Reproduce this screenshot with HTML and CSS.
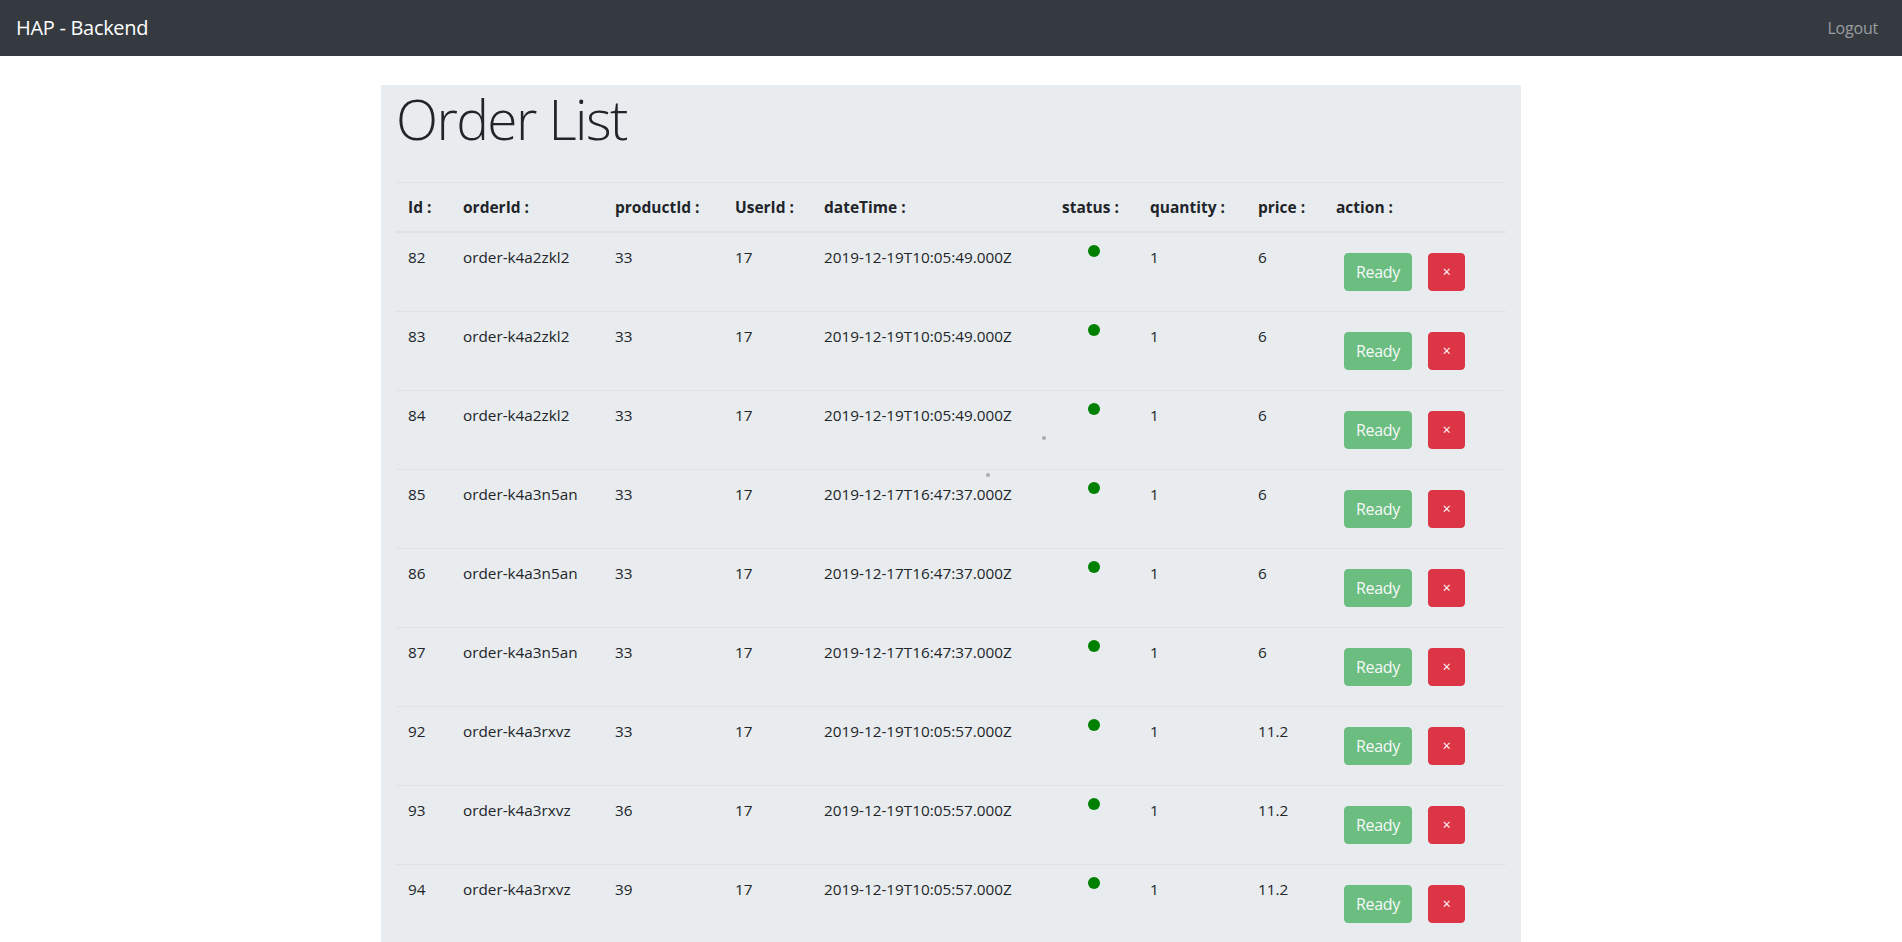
FILE: index.html
```html
<!DOCTYPE html>
<html lang="en">
<head>
<meta charset="utf-8">
<title>HAP - Backend</title>
<link rel="stylesheet" href="styles.css">
</head>
<body>
<nav class="navbar">
  <a class="brand" href="#">HAP - Backend</a>
  <a class="nav-link" href="#">Logout</a>
</nav>
<main class="container">
  <h1 class="title">Order List</h1>
  <table class="orders">
    <colgroup>
      <col class="c-id"><col class="c-order"><col class="c-product"><col class="c-user"><col class="c-date"><col class="c-status"><col class="c-qty"><col class="c-price"><col class="c-action">
    </colgroup>
    <thead>
      <tr><th>Id :</th><th>orderId :</th><th>productId :</th><th>UserId :</th><th>dateTime :</th><th>status :</th><th>quantity :</th><th>price :</th><th>action :</th></tr>
    </thead>
    <tbody>
      <tr><td>82</td><td>order-k4a2zkl2</td><td>33</td><td>17</td><td>2019-12-19T10:05:49.000Z</td><td><span class="dot"></span></td><td>1</td><td>6</td><td><button class="btn btn-ready">Ready</button><button class="btn btn-del">×</button></td></tr>
      <tr><td>83</td><td>order-k4a2zkl2</td><td>33</td><td>17</td><td>2019-12-19T10:05:49.000Z</td><td><span class="dot"></span></td><td>1</td><td>6</td><td><button class="btn btn-ready">Ready</button><button class="btn btn-del">×</button></td></tr>
      <tr><td>84</td><td>order-k4a2zkl2</td><td>33</td><td>17</td><td>2019-12-19T10:05:49.000Z</td><td><span class="dot"></span></td><td>1</td><td>6</td><td><button class="btn btn-ready">Ready</button><button class="btn btn-del">×</button></td></tr>
      <tr><td>85</td><td>order-k4a3n5an</td><td>33</td><td>17</td><td>2019-12-17T16:47:37.000Z</td><td><span class="dot"></span></td><td>1</td><td>6</td><td><button class="btn btn-ready">Ready</button><button class="btn btn-del">×</button></td></tr>
      <tr><td>86</td><td>order-k4a3n5an</td><td>33</td><td>17</td><td>2019-12-17T16:47:37.000Z</td><td><span class="dot"></span></td><td>1</td><td>6</td><td><button class="btn btn-ready">Ready</button><button class="btn btn-del">×</button></td></tr>
      <tr><td>87</td><td>order-k4a3n5an</td><td>33</td><td>17</td><td>2019-12-17T16:47:37.000Z</td><td><span class="dot"></span></td><td>1</td><td>6</td><td><button class="btn btn-ready">Ready</button><button class="btn btn-del">×</button></td></tr>
      <tr><td>92</td><td>order-k4a3rxvz</td><td>33</td><td>17</td><td>2019-12-19T10:05:57.000Z</td><td><span class="dot"></span></td><td>1</td><td>11.2</td><td><button class="btn btn-ready">Ready</button><button class="btn btn-del">×</button></td></tr>
      <tr><td>93</td><td>order-k4a3rxvz</td><td>36</td><td>17</td><td>2019-12-19T10:05:57.000Z</td><td><span class="dot"></span></td><td>1</td><td>11.2</td><td><button class="btn btn-ready">Ready</button><button class="btn btn-del">×</button></td></tr>
      <tr><td>94</td><td>order-k4a3rxvz</td><td>39</td><td>17</td><td>2019-12-19T10:05:57.000Z</td><td><span class="dot"></span></td><td>1</td><td>11.2</td><td><button class="btn btn-ready">Ready</button><button class="btn btn-del">×</button></td></tr>
    </tbody>
  </table>
</main>
<span class="speck speck-a"></span>
<span class="speck speck-b"></span>
</body>
</html>
```
FILE: styles.css
```css
* { box-sizing: border-box; }
html, body { margin: 0; padding: 0; }
body {
  font-family: "Open Sans", "Noto Sans", "Liberation Sans", sans-serif;
  font-size: 16px;
  line-height: 1.5;
  color: #212529;
  background: #fff;
  position: relative;
}
.navbar {
  height: 56px;
  background: #343a40;
  display: flex;
  align-items: center;
  justify-content: space-between;
  padding: 0 16px;
}
.brand {
  color: #fff;
  font-size: 20px;
  line-height: 30px;
  letter-spacing: -0.3px;
  text-decoration: none;
}
.nav-link {
  color: rgba(255, 255, 255, 0.5);
  font-size: 16px;
  letter-spacing: -0.2px;
  text-decoration: none;
  padding: 8px;
}
.container {
  width: 1140px;
  margin: 29px auto 0;
  padding: 0 15px;
  background: #e9ecef;
}
.title {
  font-size: 55px;
  font-weight: 300;
  line-height: 68px;
  margin: 0 0 29px;
  letter-spacing: -1.6px;
}
.orders {
  width: 100%;
  border-collapse: collapse;
  table-layout: fixed;
}
.c-id { width: 55px; }
.c-order { width: 152px; }
.c-product { width: 120px; }
.c-user { width: 89px; }
.c-date { width: 238px; }
.c-status { width: 88px; }
.c-qty { width: 108px; }
.c-price { width: 78px; }
.c-action { width: 182px; }
.orders th, .orders td {
  padding: 12px;
  text-align: left;
  vertical-align: top;
  border-top: 1px solid #dee2e6;
  white-space: nowrap;
}
.orders th {
  font-weight: 700;
  font-size: 15.5px;
  line-height: 24px;
  border-bottom: 2px solid #dee2e6;
}
.orders td { font-size: 15.3px; line-height: 24px; }
.dot {
  display: block;
  width: 12px;
  height: 12px;
  border-radius: 50%;
  background: #008000;
  margin: 0 auto;
}
.btn {
  font-family: inherit;
  font-size: 16px;
  line-height: 24px;
  height: 38px;
  padding: 6px 0;
  border: 1px solid transparent;
  border-radius: 4px;
  color: #fff;
  margin: 8px;
  vertical-align: top;
  letter-spacing: -0.3px;
}
.btn-ready {
  background: #28a745;
  border-color: #28a745;
  opacity: 0.65;
  width: 68px;
}
.btn-del {
  background: #dc3545;
  border-color: #dc3545;
  width: 37px;
  font-size: 14px;
}
.speck {
  position: absolute;
  width: 4px;
  height: 4px;
  border-radius: 50%;
  background: #a9abad;
}
.speck-a { left: 1042px; top: 436px; }
.speck-b { left: 986px; top: 473px; }
```
